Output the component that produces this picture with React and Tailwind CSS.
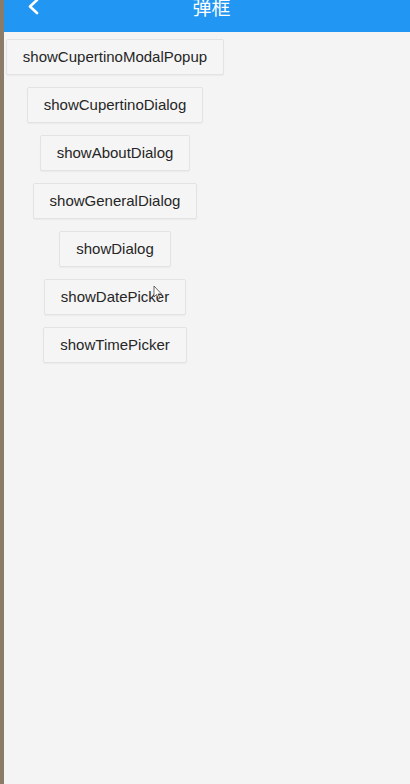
import React from "react";

const items = [
  "showCupertinoModalPopup",
  "showCupertinoDialog",
  "showAboutDialog",
  "showGeneralDialog",
  "showDialog",
  "showDatePicker",
  "showTimePicker",
];

export default function App() {
  return (
    <div className="flex h-[784px] w-[410px] bg-[#f4f4f4] font-['Liberation_Sans',sans-serif]">
      <div className="w-[4px] shrink-0 bg-[#8a7c69]" />
      <div className="relative flex flex-1 flex-col">
        <header className="relative flex h-[32px] items-start justify-center bg-[#2196f3] pl-[9px]">
          <button type="button" className="absolute left-[23px] top-[-1px] text-white">
            <svg width="13" height="16" viewBox="0 0 13 16" fill="none">
              <path d="M10 1 L3 7.5 L10 14" stroke="white" strokeWidth="2.6" strokeLinecap="round" strokeLinejoin="round" />
            </svg>
          </button>
          <h1 className="mt-[-3px] text-[19px] leading-[19px] text-white font-['Noto_Sans_CJK_SC',sans-serif]">
            弹框
          </h1>
        </header>
        <div className="flex w-[222px] flex-col items-center gap-3 pt-[7px]">
          {items.map((name) => (
            <button
              key={name}
              type="button"
              className="h-[36px] rounded-[2px] border border-[#e3e3e3] bg-[#f5f5f5] px-4 text-[15px] text-[#262626] shadow-[0_1px_1px_rgba(0,0,0,0.04)]"
            >
              {name}
            </button>
          ))}
        </div>
        <svg className="absolute left-[149px] top-[285px]" width="10" height="15" viewBox="0 0 10 15">
          <path d="M1 1 L1 12 L3.5 9.5 L5.5 14 L7 13.3 L5 9 L8.5 9 Z" fill="white" stroke="#444" strokeWidth="0.8" strokeLinejoin="round" />
        </svg>
      </div>
    </div>
  );
}
